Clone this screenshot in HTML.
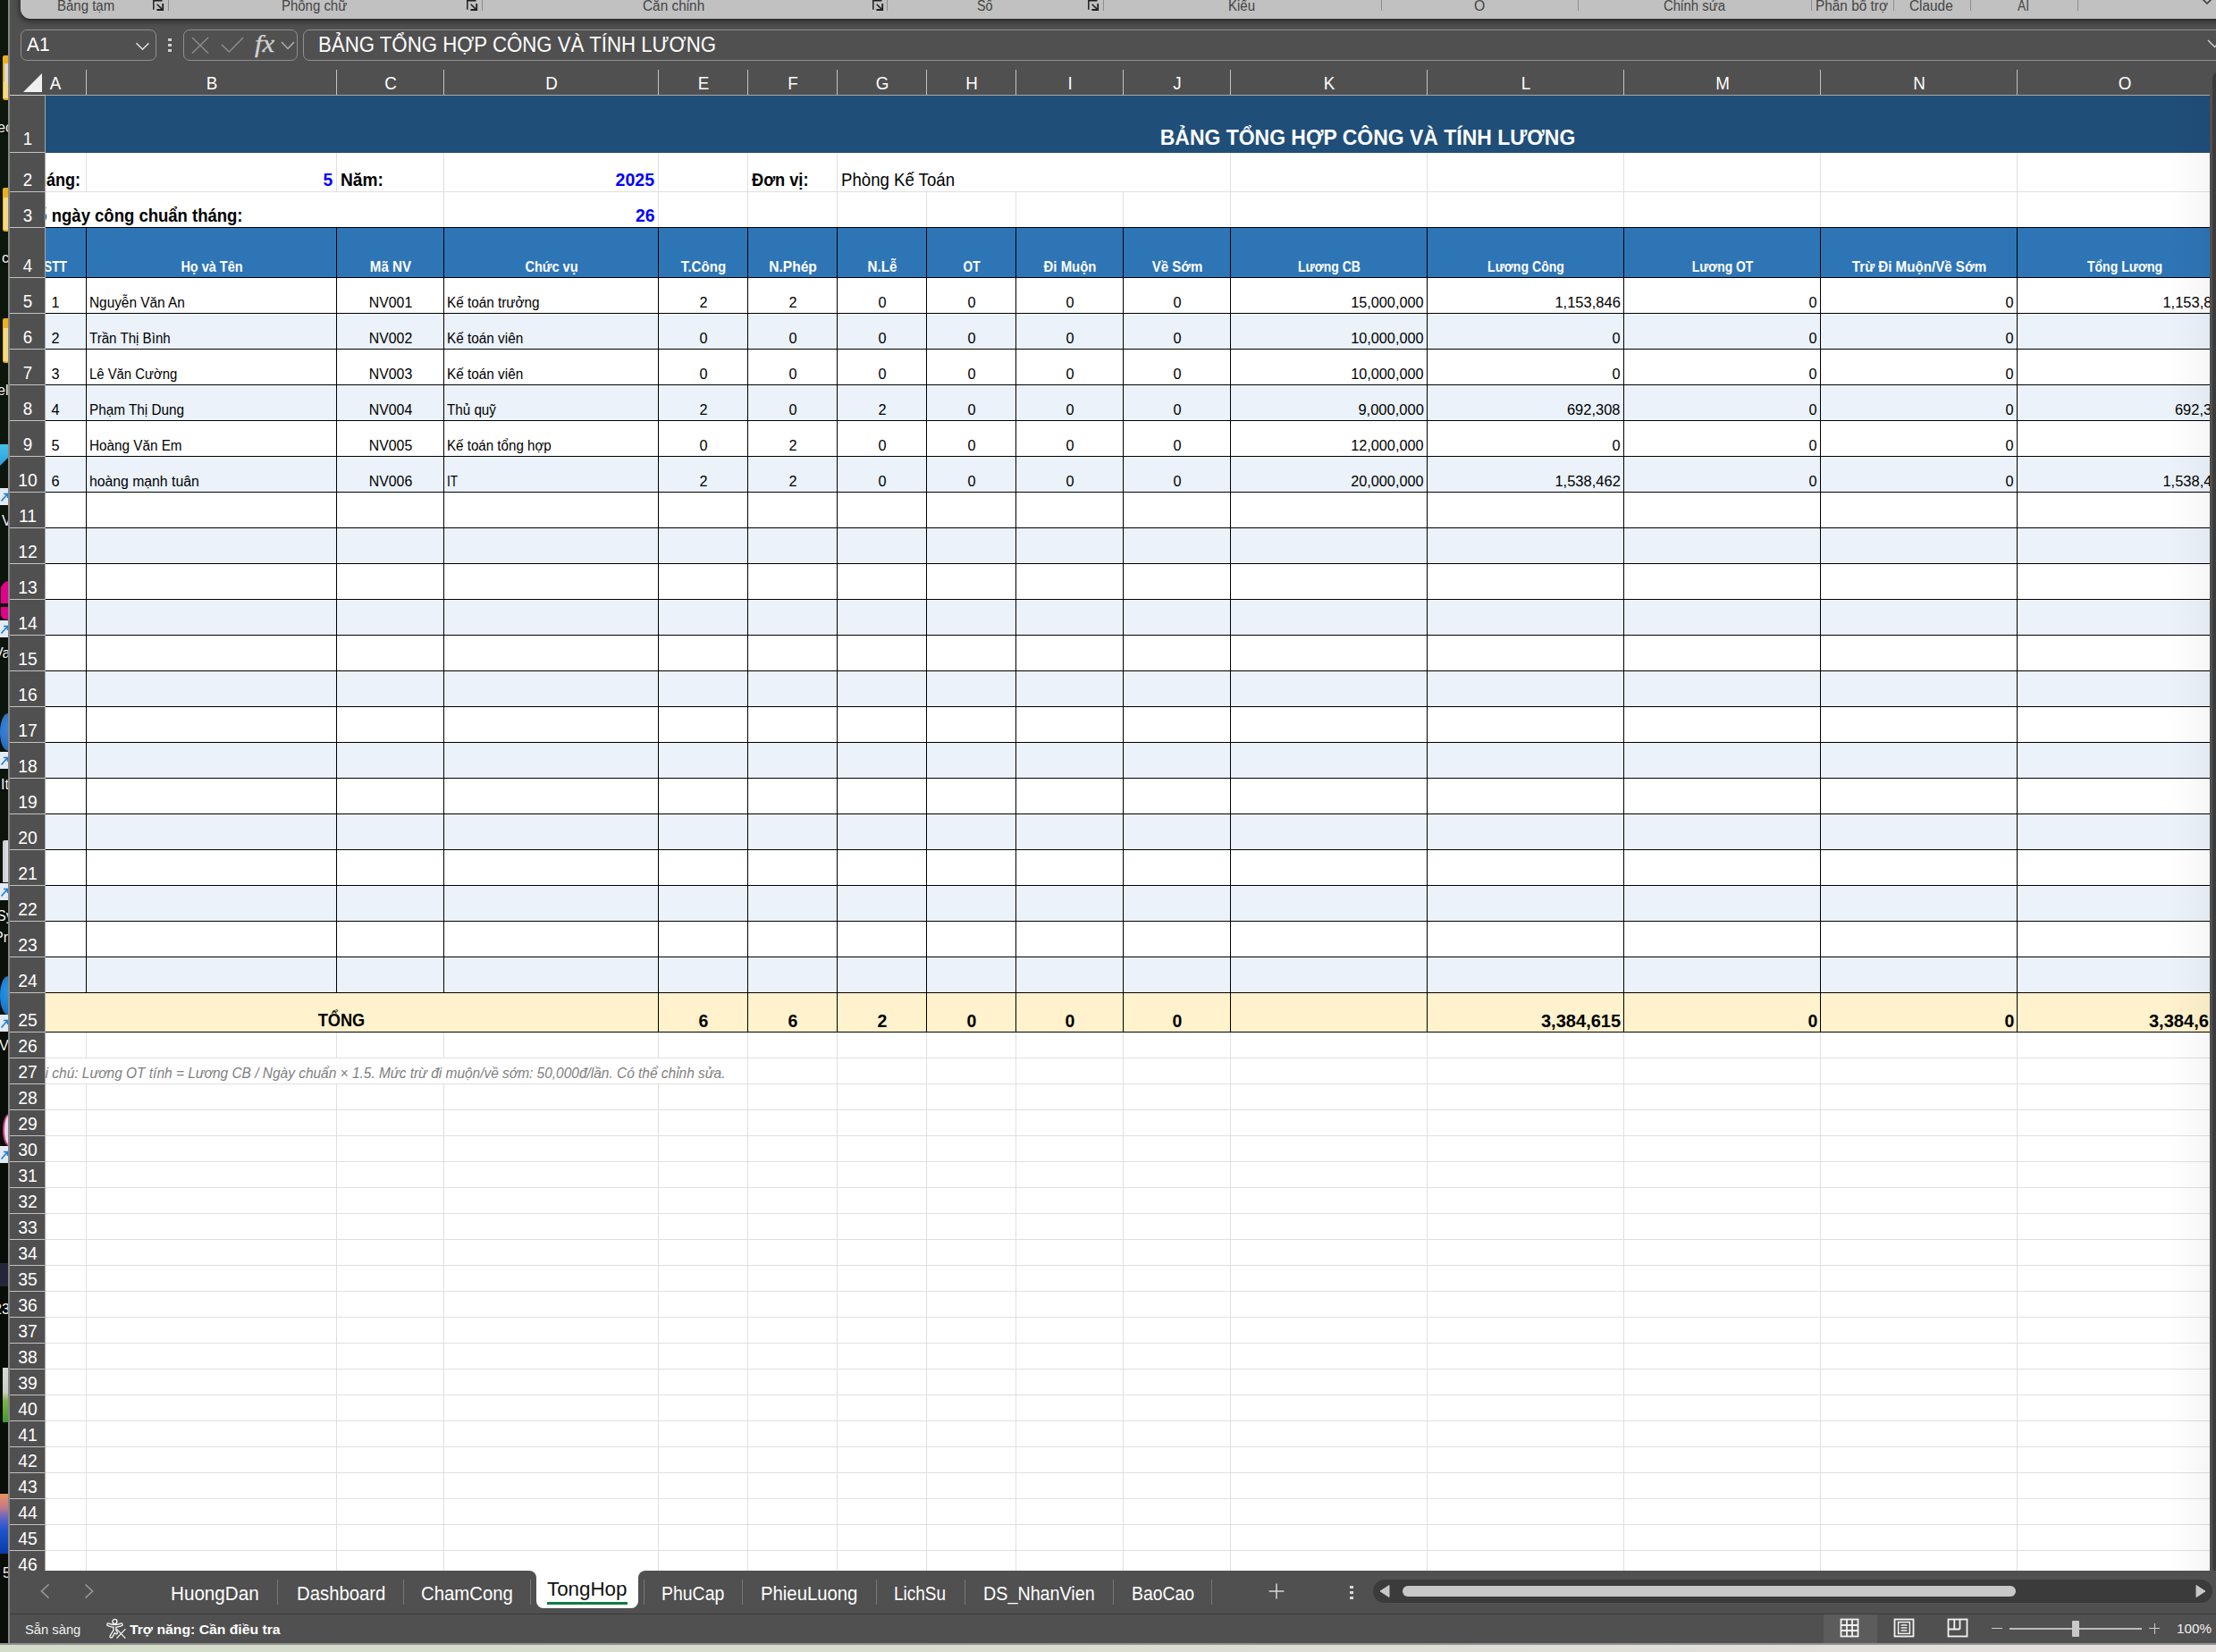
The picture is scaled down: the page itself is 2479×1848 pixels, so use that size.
<!DOCTYPE html>
<html lang="vi"><head><meta charset="utf-8"><title>TongHop - Excel</title>
<style>html,body{margin:0;padding:0;overflow:hidden}html{width:2479px;height:1848px}#root{position:absolute;left:0;top:0;width:2479px;height:1848px;overflow:hidden}body{width:2479px;height:1848px;overflow:hidden;background:#505050;position:relative;font-family:"Liberation Sans",sans-serif}.t{position:absolute;white-space:nowrap;display:block}.b{position:absolute;display:block}.clip{position:absolute;left:0;top:0;width:2479px;height:1848px;overflow:hidden}</style></head>
<body>
<div id="root">
<div class="clip" style="clip-path:inset(107px 7px 91px 51px);background:#fff">
<div class="b" style="left:96px;top:107px;width:1px;height:1650px;background:#e0e0e0;"></div>
<div class="b" style="left:376px;top:107px;width:1px;height:1650px;background:#e0e0e0;"></div>
<div class="b" style="left:496px;top:107px;width:1px;height:1650px;background:#e0e0e0;"></div>
<div class="b" style="left:736px;top:107px;width:1px;height:1650px;background:#e0e0e0;"></div>
<div class="b" style="left:836px;top:107px;width:1px;height:1650px;background:#e0e0e0;"></div>
<div class="b" style="left:936px;top:107px;width:1px;height:1650px;background:#e0e0e0;"></div>
<div class="b" style="left:1036px;top:107px;width:1px;height:1650px;background:#e0e0e0;"></div>
<div class="b" style="left:1136px;top:107px;width:1px;height:1650px;background:#e0e0e0;"></div>
<div class="b" style="left:1256px;top:107px;width:1px;height:1650px;background:#e0e0e0;"></div>
<div class="b" style="left:1376px;top:107px;width:1px;height:1650px;background:#e0e0e0;"></div>
<div class="b" style="left:1596px;top:107px;width:1px;height:1650px;background:#e0e0e0;"></div>
<div class="b" style="left:1816px;top:107px;width:1px;height:1650px;background:#e0e0e0;"></div>
<div class="b" style="left:2036px;top:107px;width:1px;height:1650px;background:#e0e0e0;"></div>
<div class="b" style="left:2256px;top:107px;width:1px;height:1650px;background:#e0e0e0;"></div>
<div class="b" style="left:51px;top:170px;width:2421px;height:1px;background:#e0e0e0;"></div>
<div class="b" style="left:51px;top:214px;width:2421px;height:1px;background:#e0e0e0;"></div>
<div class="b" style="left:51px;top:254px;width:2421px;height:1px;background:#e0e0e0;"></div>
<div class="b" style="left:51px;top:310px;width:2421px;height:1px;background:#e0e0e0;"></div>
<div class="b" style="left:51px;top:350px;width:2421px;height:1px;background:#e0e0e0;"></div>
<div class="b" style="left:51px;top:390px;width:2421px;height:1px;background:#e0e0e0;"></div>
<div class="b" style="left:51px;top:430px;width:2421px;height:1px;background:#e0e0e0;"></div>
<div class="b" style="left:51px;top:470px;width:2421px;height:1px;background:#e0e0e0;"></div>
<div class="b" style="left:51px;top:510px;width:2421px;height:1px;background:#e0e0e0;"></div>
<div class="b" style="left:51px;top:550px;width:2421px;height:1px;background:#e0e0e0;"></div>
<div class="b" style="left:51px;top:590px;width:2421px;height:1px;background:#e0e0e0;"></div>
<div class="b" style="left:51px;top:630px;width:2421px;height:1px;background:#e0e0e0;"></div>
<div class="b" style="left:51px;top:670px;width:2421px;height:1px;background:#e0e0e0;"></div>
<div class="b" style="left:51px;top:710px;width:2421px;height:1px;background:#e0e0e0;"></div>
<div class="b" style="left:51px;top:750px;width:2421px;height:1px;background:#e0e0e0;"></div>
<div class="b" style="left:51px;top:790px;width:2421px;height:1px;background:#e0e0e0;"></div>
<div class="b" style="left:51px;top:830px;width:2421px;height:1px;background:#e0e0e0;"></div>
<div class="b" style="left:51px;top:870px;width:2421px;height:1px;background:#e0e0e0;"></div>
<div class="b" style="left:51px;top:910px;width:2421px;height:1px;background:#e0e0e0;"></div>
<div class="b" style="left:51px;top:950px;width:2421px;height:1px;background:#e0e0e0;"></div>
<div class="b" style="left:51px;top:990px;width:2421px;height:1px;background:#e0e0e0;"></div>
<div class="b" style="left:51px;top:1030px;width:2421px;height:1px;background:#e0e0e0;"></div>
<div class="b" style="left:51px;top:1070px;width:2421px;height:1px;background:#e0e0e0;"></div>
<div class="b" style="left:51px;top:1110px;width:2421px;height:1px;background:#e0e0e0;"></div>
<div class="b" style="left:51px;top:1154px;width:2421px;height:1px;background:#e0e0e0;"></div>
<div class="b" style="left:51px;top:1183px;width:2421px;height:1px;background:#e0e0e0;"></div>
<div class="b" style="left:51px;top:1212px;width:2421px;height:1px;background:#e0e0e0;"></div>
<div class="b" style="left:51px;top:1241px;width:2421px;height:1px;background:#e0e0e0;"></div>
<div class="b" style="left:51px;top:1270px;width:2421px;height:1px;background:#e0e0e0;"></div>
<div class="b" style="left:51px;top:1299px;width:2421px;height:1px;background:#e0e0e0;"></div>
<div class="b" style="left:51px;top:1328px;width:2421px;height:1px;background:#e0e0e0;"></div>
<div class="b" style="left:51px;top:1357px;width:2421px;height:1px;background:#e0e0e0;"></div>
<div class="b" style="left:51px;top:1386px;width:2421px;height:1px;background:#e0e0e0;"></div>
<div class="b" style="left:51px;top:1415px;width:2421px;height:1px;background:#e0e0e0;"></div>
<div class="b" style="left:51px;top:1444px;width:2421px;height:1px;background:#e0e0e0;"></div>
<div class="b" style="left:51px;top:1473px;width:2421px;height:1px;background:#e0e0e0;"></div>
<div class="b" style="left:51px;top:1502px;width:2421px;height:1px;background:#e0e0e0;"></div>
<div class="b" style="left:51px;top:1531px;width:2421px;height:1px;background:#e0e0e0;"></div>
<div class="b" style="left:51px;top:1560px;width:2421px;height:1px;background:#e0e0e0;"></div>
<div class="b" style="left:51px;top:1589px;width:2421px;height:1px;background:#e0e0e0;"></div>
<div class="b" style="left:51px;top:1618px;width:2421px;height:1px;background:#e0e0e0;"></div>
<div class="b" style="left:51px;top:1647px;width:2421px;height:1px;background:#e0e0e0;"></div>
<div class="b" style="left:51px;top:1676px;width:2421px;height:1px;background:#e0e0e0;"></div>
<div class="b" style="left:51px;top:1705px;width:2421px;height:1px;background:#e0e0e0;"></div>
<div class="b" style="left:51px;top:1734px;width:2421px;height:1px;background:#e0e0e0;"></div>
<div class="b" style="left:51px;top:1763px;width:2421px;height:1px;background:#e0e0e0;"></div>
<div class="b" style="left:51px;top:215px;width:445px;height:39px;background:#fff;"></div>
<div class="b" style="left:937px;top:171px;width:439px;height:43px;background:#fff;"></div>
<div class="b" style="left:51px;top:1184px;width:785px;height:28px;background:#fff;"></div>
<div class="b" style="left:26px;top:107px;width:2470px;height:64px;background:#1f4e79;"></div>
<div class="b" style="left:26px;top:255px;width:2470px;height:55px;background:#2e75b6;"></div>
<div class="b" style="left:26px;top:311px;width:2470px;height:39px;background:#ffffff;"></div>
<div class="b" style="left:26px;top:351px;width:2470px;height:39px;background:#ebf2fa;"></div>
<div class="b" style="left:26px;top:391px;width:2470px;height:39px;background:#ffffff;"></div>
<div class="b" style="left:26px;top:431px;width:2470px;height:39px;background:#ebf2fa;"></div>
<div class="b" style="left:26px;top:471px;width:2470px;height:39px;background:#ffffff;"></div>
<div class="b" style="left:26px;top:511px;width:2470px;height:39px;background:#ebf2fa;"></div>
<div class="b" style="left:26px;top:551px;width:2470px;height:39px;background:#ffffff;"></div>
<div class="b" style="left:26px;top:591px;width:2470px;height:39px;background:#ebf2fa;"></div>
<div class="b" style="left:26px;top:631px;width:2470px;height:39px;background:#ffffff;"></div>
<div class="b" style="left:26px;top:671px;width:2470px;height:39px;background:#ebf2fa;"></div>
<div class="b" style="left:26px;top:711px;width:2470px;height:39px;background:#ffffff;"></div>
<div class="b" style="left:26px;top:751px;width:2470px;height:39px;background:#ebf2fa;"></div>
<div class="b" style="left:26px;top:791px;width:2470px;height:39px;background:#ffffff;"></div>
<div class="b" style="left:26px;top:831px;width:2470px;height:39px;background:#ebf2fa;"></div>
<div class="b" style="left:26px;top:871px;width:2470px;height:39px;background:#ffffff;"></div>
<div class="b" style="left:26px;top:911px;width:2470px;height:39px;background:#ebf2fa;"></div>
<div class="b" style="left:26px;top:951px;width:2470px;height:39px;background:#ffffff;"></div>
<div class="b" style="left:26px;top:991px;width:2470px;height:39px;background:#ebf2fa;"></div>
<div class="b" style="left:26px;top:1031px;width:2470px;height:39px;background:#ffffff;"></div>
<div class="b" style="left:26px;top:1071px;width:2470px;height:39px;background:#ebf2fa;"></div>
<div class="b" style="left:26px;top:1111px;width:2470px;height:43px;background:#fff2cc;"></div>
<div class="b" style="left:26px;top:254px;width:2470px;height:1px;background:#000;"></div>
<div class="b" style="left:26px;top:310px;width:2470px;height:1px;background:#000;"></div>
<div class="b" style="left:26px;top:350px;width:2470px;height:1px;background:#000;"></div>
<div class="b" style="left:26px;top:390px;width:2470px;height:1px;background:#000;"></div>
<div class="b" style="left:26px;top:430px;width:2470px;height:1px;background:#000;"></div>
<div class="b" style="left:26px;top:470px;width:2470px;height:1px;background:#000;"></div>
<div class="b" style="left:26px;top:510px;width:2470px;height:1px;background:#000;"></div>
<div class="b" style="left:26px;top:550px;width:2470px;height:1px;background:#000;"></div>
<div class="b" style="left:26px;top:590px;width:2470px;height:1px;background:#000;"></div>
<div class="b" style="left:26px;top:630px;width:2470px;height:1px;background:#000;"></div>
<div class="b" style="left:26px;top:670px;width:2470px;height:1px;background:#000;"></div>
<div class="b" style="left:26px;top:710px;width:2470px;height:1px;background:#000;"></div>
<div class="b" style="left:26px;top:750px;width:2470px;height:1px;background:#000;"></div>
<div class="b" style="left:26px;top:790px;width:2470px;height:1px;background:#000;"></div>
<div class="b" style="left:26px;top:830px;width:2470px;height:1px;background:#000;"></div>
<div class="b" style="left:26px;top:870px;width:2470px;height:1px;background:#000;"></div>
<div class="b" style="left:26px;top:910px;width:2470px;height:1px;background:#000;"></div>
<div class="b" style="left:26px;top:950px;width:2470px;height:1px;background:#000;"></div>
<div class="b" style="left:26px;top:990px;width:2470px;height:1px;background:#000;"></div>
<div class="b" style="left:26px;top:1030px;width:2470px;height:1px;background:#000;"></div>
<div class="b" style="left:26px;top:1070px;width:2470px;height:1px;background:#000;"></div>
<div class="b" style="left:26px;top:1110px;width:2470px;height:1px;background:#000;"></div>
<div class="b" style="left:26px;top:1154px;width:2470px;height:1px;background:#000;"></div>
<div class="b" style="left:96px;top:254px;width:1px;height:857px;background:#000;"></div>
<div class="b" style="left:376px;top:254px;width:1px;height:857px;background:#000;"></div>
<div class="b" style="left:496px;top:254px;width:1px;height:857px;background:#000;"></div>
<div class="b" style="left:736px;top:254px;width:1px;height:901px;background:#000;"></div>
<div class="b" style="left:836px;top:254px;width:1px;height:901px;background:#000;"></div>
<div class="b" style="left:936px;top:254px;width:1px;height:901px;background:#000;"></div>
<div class="b" style="left:1036px;top:254px;width:1px;height:901px;background:#000;"></div>
<div class="b" style="left:1136px;top:254px;width:1px;height:901px;background:#000;"></div>
<div class="b" style="left:1256px;top:254px;width:1px;height:901px;background:#000;"></div>
<div class="b" style="left:1376px;top:254px;width:1px;height:901px;background:#000;"></div>
<div class="b" style="left:1596px;top:254px;width:1px;height:901px;background:#000;"></div>
<div class="b" style="left:1816px;top:254px;width:1px;height:901px;background:#000;"></div>
<div class="b" style="left:2036px;top:254px;width:1px;height:901px;background:#000;"></div>
<div class="b" style="left:2256px;top:254px;width:1px;height:901px;background:#000;"></div>
<div class="b" style="left:2425px;top:107px;width:47px;height:1650px;background:linear-gradient(90deg,rgba(0,0,0,0),rgba(0,0,0,.035))"></div>
<span class="t" style="top:134.31px;line-height:39px;height:39px;color:#fff;font-size:24.5px;font-weight:bold;left:1530.00px;transform-origin:50% 50%;transform:translateX(-50%) scaleX(0.9367);">BẢNG TỔNG HỢP CÔNG VÀ TÍNH LƯƠNG</span><span class="t" style="top:184.67px;line-height:32px;height:32px;color:#000;font-size:20.3px;font-weight:bold;left:30.40px;transform-origin:0 50%;transform:scaleX(0.8877);">Tháng:</span><span class="t" style="top:184.67px;line-height:32px;height:32px;color:#0000ff;font-size:20.3px;font-weight:bold;right:2106.50px;transform-origin:100% 50%;transform:scaleX(0.9500);">5</span><span class="t" style="top:184.67px;line-height:32px;height:32px;color:#000;font-size:20.3px;font-weight:bold;left:380.50px;transform-origin:0 50%;transform:scaleX(0.9425);">Năm:</span><span class="t" style="top:184.67px;line-height:32px;height:32px;color:#0000ff;font-size:20.3px;font-weight:bold;right:1746.50px;transform-origin:100% 50%;transform:scaleX(0.9640);">2025</span><span class="t" style="top:184.67px;line-height:32px;height:32px;color:#000;font-size:20.3px;font-weight:bold;left:840.50px;transform-origin:0 50%;transform:scaleX(0.8973);">Đơn vị:</span><span class="t" style="top:184.67px;line-height:32px;height:32px;color:#000;font-size:20.3px;left:940.50px;transform-origin:0 50%;transform:scaleX(0.9180);">Phòng Kế Toán</span><span class="t" style="top:224.67px;line-height:32px;height:32px;color:#000;font-size:20.3px;font-weight:bold;left:29.00px;transform-origin:0 50%;transform:scaleX(0.9119);">Số ngày công chuẩn tháng:</span><span class="t" style="top:224.67px;line-height:32px;height:32px;color:#0000ff;font-size:20.3px;font-weight:bold;right:1746.50px;transform-origin:100% 50%;transform:scaleX(0.9529);">26</span><span class="t" style="top:284.21px;line-height:28px;height:28px;color:#fff;font-size:17.3px;font-weight:bold;left:61.50px;transform-origin:50% 50%;transform:translateX(-50%) scaleX(0.7904);">STT</span><span class="t" style="top:284.21px;line-height:28px;height:28px;color:#fff;font-size:17.3px;font-weight:bold;left:236.50px;transform-origin:50% 50%;transform:translateX(-50%) scaleX(0.8378);">Họ và Tên</span><span class="t" style="top:284.21px;line-height:28px;height:28px;color:#fff;font-size:17.3px;font-weight:bold;left:436.50px;transform-origin:50% 50%;transform:translateX(-50%) scaleX(0.8764);">Mã NV</span><span class="t" style="top:284.21px;line-height:28px;height:28px;color:#fff;font-size:17.3px;font-weight:bold;left:616.50px;transform-origin:50% 50%;transform:translateX(-50%) scaleX(0.8440);">Chức vụ</span><span class="t" style="top:284.21px;line-height:28px;height:28px;color:#fff;font-size:17.3px;font-weight:bold;left:786.50px;transform-origin:50% 50%;transform:translateX(-50%) scaleX(0.8734);">T.Công</span><span class="t" style="top:284.21px;line-height:28px;height:28px;color:#fff;font-size:17.3px;font-weight:bold;left:886.50px;transform-origin:50% 50%;transform:translateX(-50%) scaleX(0.9020);">N.Phép</span><span class="t" style="top:284.21px;line-height:28px;height:28px;color:#fff;font-size:17.3px;font-weight:bold;left:986.50px;transform-origin:50% 50%;transform:translateX(-50%) scaleX(0.8784);">N.Lễ</span><span class="t" style="top:284.21px;line-height:28px;height:28px;color:#fff;font-size:17.3px;font-weight:bold;left:1086.50px;transform-origin:50% 50%;transform:translateX(-50%) scaleX(0.7875);">OT</span><span class="t" style="top:284.21px;line-height:28px;height:28px;color:#fff;font-size:17.3px;font-weight:bold;left:1196.50px;transform-origin:50% 50%;transform:translateX(-50%) scaleX(0.8627);">Đi Muộn</span><span class="t" style="top:284.21px;line-height:28px;height:28px;color:#fff;font-size:17.3px;font-weight:bold;left:1316.50px;transform-origin:50% 50%;transform:translateX(-50%) scaleX(0.8691);">Về Sớm</span><span class="t" style="top:284.21px;line-height:28px;height:28px;color:#fff;font-size:17.3px;font-weight:bold;left:1486.50px;transform-origin:50% 50%;transform:translateX(-50%) scaleX(0.8106);">Lương CB</span><span class="t" style="top:284.21px;line-height:28px;height:28px;color:#fff;font-size:17.3px;font-weight:bold;left:1706.50px;transform-origin:50% 50%;transform:translateX(-50%) scaleX(0.8148);">Lương Công</span><span class="t" style="top:284.21px;line-height:28px;height:28px;color:#fff;font-size:17.3px;font-weight:bold;left:1926.50px;transform-origin:50% 50%;transform:translateX(-50%) scaleX(0.8032);">Lương OT</span><span class="t" style="top:284.21px;line-height:28px;height:28px;color:#fff;font-size:17.3px;font-weight:bold;left:2146.50px;transform-origin:50% 50%;transform:translateX(-50%) scaleX(0.8753);">Trừ Đi Muộn/Về Sớm</span><span class="t" style="top:284.21px;line-height:28px;height:28px;color:#fff;font-size:17.3px;font-weight:bold;left:2376.50px;transform-origin:50% 50%;transform:translateX(-50%) scaleX(0.8126);">Tổng Lương</span><span class="t" style="top:324.31px;line-height:28px;height:28px;color:#000;font-size:17.3px;left:61.50px;transform-origin:50% 50%;transform:translateX(-50%) scaleX(0.9400);">1</span><span class="t" style="top:324.31px;line-height:28px;height:28px;color:#000;font-size:17.3px;left:100.40px;transform-origin:0 50%;transform:scaleX(0.8892);">Nguyễn Văn An</span><span class="t" style="top:324.31px;line-height:28px;height:28px;color:#000;font-size:17.3px;left:436.50px;transform-origin:50% 50%;transform:translateX(-50%) scaleX(0.9159);">NV001</span><span class="t" style="top:324.31px;line-height:28px;height:28px;color:#000;font-size:17.3px;left:500.20px;transform-origin:0 50%;transform:scaleX(0.8850);">Kế toán trưởng</span><span class="t" style="top:324.31px;line-height:28px;height:28px;color:#000;font-size:17.3px;left:786.50px;transform-origin:50% 50%;transform:translateX(-50%) scaleX(0.9400);">2</span><span class="t" style="top:324.31px;line-height:28px;height:28px;color:#000;font-size:17.3px;left:886.50px;transform-origin:50% 50%;transform:translateX(-50%) scaleX(0.9400);">2</span><span class="t" style="top:324.31px;line-height:28px;height:28px;color:#000;font-size:17.3px;left:986.50px;transform-origin:50% 50%;transform:translateX(-50%) scaleX(0.9400);">0</span><span class="t" style="top:324.31px;line-height:28px;height:28px;color:#000;font-size:17.3px;left:1086.50px;transform-origin:50% 50%;transform:translateX(-50%) scaleX(0.9400);">0</span><span class="t" style="top:324.31px;line-height:28px;height:28px;color:#000;font-size:17.3px;left:1196.50px;transform-origin:50% 50%;transform:translateX(-50%) scaleX(0.9400);">0</span><span class="t" style="top:324.31px;line-height:28px;height:28px;color:#000;font-size:17.3px;left:1316.50px;transform-origin:50% 50%;transform:translateX(-50%) scaleX(0.9400);">0</span><span class="t" style="top:324.31px;line-height:28px;height:28px;color:#000;font-size:17.3px;right:886.20px;transform-origin:100% 50%;transform:scaleX(0.9399);">15,000,000</span><span class="t" style="top:324.31px;line-height:28px;height:28px;color:#000;font-size:17.3px;right:666.20px;transform-origin:100% 50%;transform:scaleX(0.9559);">1,153,846</span><span class="t" style="top:324.31px;line-height:28px;height:28px;color:#000;font-size:17.3px;right:446.20px;transform-origin:100% 50%;transform:scaleX(0.9400);">0</span><span class="t" style="top:324.31px;line-height:28px;height:28px;color:#000;font-size:17.3px;right:226.20px;transform-origin:100% 50%;transform:scaleX(0.9400);">0</span><span class="t" style="top:324.31px;line-height:28px;height:28px;color:#000;font-size:17.3px;right:-13.80px;transform-origin:100% 50%;transform:scaleX(0.9559);">1,153,846</span><span class="t" style="top:364.31px;line-height:28px;height:28px;color:#000;font-size:17.3px;left:61.50px;transform-origin:50% 50%;transform:translateX(-50%) scaleX(0.9400);">2</span><span class="t" style="top:364.31px;line-height:28px;height:28px;color:#000;font-size:17.3px;left:100.40px;transform-origin:0 50%;transform:scaleX(0.8742);">Trần Thị Bình</span><span class="t" style="top:364.31px;line-height:28px;height:28px;color:#000;font-size:17.3px;left:436.50px;transform-origin:50% 50%;transform:translateX(-50%) scaleX(0.9159);">NV002</span><span class="t" style="top:364.31px;line-height:28px;height:28px;color:#000;font-size:17.3px;left:500.20px;transform-origin:0 50%;transform:scaleX(0.8868);">Kế toán viên</span><span class="t" style="top:364.31px;line-height:28px;height:28px;color:#000;font-size:17.3px;left:786.50px;transform-origin:50% 50%;transform:translateX(-50%) scaleX(0.9400);">0</span><span class="t" style="top:364.31px;line-height:28px;height:28px;color:#000;font-size:17.3px;left:886.50px;transform-origin:50% 50%;transform:translateX(-50%) scaleX(0.9400);">0</span><span class="t" style="top:364.31px;line-height:28px;height:28px;color:#000;font-size:17.3px;left:986.50px;transform-origin:50% 50%;transform:translateX(-50%) scaleX(0.9400);">0</span><span class="t" style="top:364.31px;line-height:28px;height:28px;color:#000;font-size:17.3px;left:1086.50px;transform-origin:50% 50%;transform:translateX(-50%) scaleX(0.9400);">0</span><span class="t" style="top:364.31px;line-height:28px;height:28px;color:#000;font-size:17.3px;left:1196.50px;transform-origin:50% 50%;transform:translateX(-50%) scaleX(0.9400);">0</span><span class="t" style="top:364.31px;line-height:28px;height:28px;color:#000;font-size:17.3px;left:1316.50px;transform-origin:50% 50%;transform:translateX(-50%) scaleX(0.9400);">0</span><span class="t" style="top:364.31px;line-height:28px;height:28px;color:#000;font-size:17.3px;right:886.20px;transform-origin:100% 50%;transform:scaleX(0.9399);">10,000,000</span><span class="t" style="top:364.31px;line-height:28px;height:28px;color:#000;font-size:17.3px;right:666.20px;transform-origin:100% 50%;transform:scaleX(0.9400);">0</span><span class="t" style="top:364.31px;line-height:28px;height:28px;color:#000;font-size:17.3px;right:446.20px;transform-origin:100% 50%;transform:scaleX(0.9400);">0</span><span class="t" style="top:364.31px;line-height:28px;height:28px;color:#000;font-size:17.3px;right:226.20px;transform-origin:100% 50%;transform:scaleX(0.9400);">0</span><span class="t" style="top:404.31px;line-height:28px;height:28px;color:#000;font-size:17.3px;left:61.50px;transform-origin:50% 50%;transform:translateX(-50%) scaleX(0.9400);">3</span><span class="t" style="top:404.31px;line-height:28px;height:28px;color:#000;font-size:17.3px;left:100.40px;transform-origin:0 50%;transform:scaleX(0.8600);">Lê Văn Cường</span><span class="t" style="top:404.31px;line-height:28px;height:28px;color:#000;font-size:17.3px;left:436.50px;transform-origin:50% 50%;transform:translateX(-50%) scaleX(0.9159);">NV003</span><span class="t" style="top:404.31px;line-height:28px;height:28px;color:#000;font-size:17.3px;left:500.20px;transform-origin:0 50%;transform:scaleX(0.8868);">Kế toán viên</span><span class="t" style="top:404.31px;line-height:28px;height:28px;color:#000;font-size:17.3px;left:786.50px;transform-origin:50% 50%;transform:translateX(-50%) scaleX(0.9400);">0</span><span class="t" style="top:404.31px;line-height:28px;height:28px;color:#000;font-size:17.3px;left:886.50px;transform-origin:50% 50%;transform:translateX(-50%) scaleX(0.9400);">0</span><span class="t" style="top:404.31px;line-height:28px;height:28px;color:#000;font-size:17.3px;left:986.50px;transform-origin:50% 50%;transform:translateX(-50%) scaleX(0.9400);">0</span><span class="t" style="top:404.31px;line-height:28px;height:28px;color:#000;font-size:17.3px;left:1086.50px;transform-origin:50% 50%;transform:translateX(-50%) scaleX(0.9400);">0</span><span class="t" style="top:404.31px;line-height:28px;height:28px;color:#000;font-size:17.3px;left:1196.50px;transform-origin:50% 50%;transform:translateX(-50%) scaleX(0.9400);">0</span><span class="t" style="top:404.31px;line-height:28px;height:28px;color:#000;font-size:17.3px;left:1316.50px;transform-origin:50% 50%;transform:translateX(-50%) scaleX(0.9400);">0</span><span class="t" style="top:404.31px;line-height:28px;height:28px;color:#000;font-size:17.3px;right:886.20px;transform-origin:100% 50%;transform:scaleX(0.9399);">10,000,000</span><span class="t" style="top:404.31px;line-height:28px;height:28px;color:#000;font-size:17.3px;right:666.20px;transform-origin:100% 50%;transform:scaleX(0.9400);">0</span><span class="t" style="top:404.31px;line-height:28px;height:28px;color:#000;font-size:17.3px;right:446.20px;transform-origin:100% 50%;transform:scaleX(0.9400);">0</span><span class="t" style="top:404.31px;line-height:28px;height:28px;color:#000;font-size:17.3px;right:226.20px;transform-origin:100% 50%;transform:scaleX(0.9400);">0</span><span class="t" style="top:444.31px;line-height:28px;height:28px;color:#000;font-size:17.3px;left:61.50px;transform-origin:50% 50%;transform:translateX(-50%) scaleX(0.9400);">4</span><span class="t" style="top:444.31px;line-height:28px;height:28px;color:#000;font-size:17.3px;left:100.40px;transform-origin:0 50%;transform:scaleX(0.8859);">Phạm Thị Dung</span><span class="t" style="top:444.31px;line-height:28px;height:28px;color:#000;font-size:17.3px;left:436.50px;transform-origin:50% 50%;transform:translateX(-50%) scaleX(0.9159);">NV004</span><span class="t" style="top:444.31px;line-height:28px;height:28px;color:#000;font-size:17.3px;left:500.20px;transform-origin:0 50%;transform:scaleX(0.8791);">Thủ quỹ</span><span class="t" style="top:444.31px;line-height:28px;height:28px;color:#000;font-size:17.3px;left:786.50px;transform-origin:50% 50%;transform:translateX(-50%) scaleX(0.9400);">2</span><span class="t" style="top:444.31px;line-height:28px;height:28px;color:#000;font-size:17.3px;left:886.50px;transform-origin:50% 50%;transform:translateX(-50%) scaleX(0.9400);">0</span><span class="t" style="top:444.31px;line-height:28px;height:28px;color:#000;font-size:17.3px;left:986.50px;transform-origin:50% 50%;transform:translateX(-50%) scaleX(0.9400);">2</span><span class="t" style="top:444.31px;line-height:28px;height:28px;color:#000;font-size:17.3px;left:1086.50px;transform-origin:50% 50%;transform:translateX(-50%) scaleX(0.9400);">0</span><span class="t" style="top:444.31px;line-height:28px;height:28px;color:#000;font-size:17.3px;left:1196.50px;transform-origin:50% 50%;transform:translateX(-50%) scaleX(0.9400);">0</span><span class="t" style="top:444.31px;line-height:28px;height:28px;color:#000;font-size:17.3px;left:1316.50px;transform-origin:50% 50%;transform:translateX(-50%) scaleX(0.9400);">0</span><span class="t" style="top:444.31px;line-height:28px;height:28px;color:#000;font-size:17.3px;right:886.20px;transform-origin:100% 50%;transform:scaleX(0.9559);">9,000,000</span><span class="t" style="top:444.31px;line-height:28px;height:28px;color:#000;font-size:17.3px;right:666.20px;transform-origin:100% 50%;transform:scaleX(0.9525);">692,308</span><span class="t" style="top:444.31px;line-height:28px;height:28px;color:#000;font-size:17.3px;right:446.20px;transform-origin:100% 50%;transform:scaleX(0.9400);">0</span><span class="t" style="top:444.31px;line-height:28px;height:28px;color:#000;font-size:17.3px;right:226.20px;transform-origin:100% 50%;transform:scaleX(0.9400);">0</span><span class="t" style="top:444.31px;line-height:28px;height:28px;color:#000;font-size:17.3px;right:-13.80px;transform-origin:100% 50%;transform:scaleX(0.9525);">692,308</span><span class="t" style="top:484.31px;line-height:28px;height:28px;color:#000;font-size:17.3px;left:61.50px;transform-origin:50% 50%;transform:translateX(-50%) scaleX(0.9400);">5</span><span class="t" style="top:484.31px;line-height:28px;height:28px;color:#000;font-size:17.3px;left:100.40px;transform-origin:0 50%;transform:scaleX(0.8839);">Hoàng Văn Em</span><span class="t" style="top:484.31px;line-height:28px;height:28px;color:#000;font-size:17.3px;left:436.50px;transform-origin:50% 50%;transform:translateX(-50%) scaleX(0.9159);">NV005</span><span class="t" style="top:484.31px;line-height:28px;height:28px;color:#000;font-size:17.3px;left:500.20px;transform-origin:0 50%;transform:scaleX(0.8757);">Kế toán tổng hợp</span><span class="t" style="top:484.31px;line-height:28px;height:28px;color:#000;font-size:17.3px;left:786.50px;transform-origin:50% 50%;transform:translateX(-50%) scaleX(0.9400);">0</span><span class="t" style="top:484.31px;line-height:28px;height:28px;color:#000;font-size:17.3px;left:886.50px;transform-origin:50% 50%;transform:translateX(-50%) scaleX(0.9400);">2</span><span class="t" style="top:484.31px;line-height:28px;height:28px;color:#000;font-size:17.3px;left:986.50px;transform-origin:50% 50%;transform:translateX(-50%) scaleX(0.9400);">0</span><span class="t" style="top:484.31px;line-height:28px;height:28px;color:#000;font-size:17.3px;left:1086.50px;transform-origin:50% 50%;transform:translateX(-50%) scaleX(0.9400);">0</span><span class="t" style="top:484.31px;line-height:28px;height:28px;color:#000;font-size:17.3px;left:1196.50px;transform-origin:50% 50%;transform:translateX(-50%) scaleX(0.9400);">0</span><span class="t" style="top:484.31px;line-height:28px;height:28px;color:#000;font-size:17.3px;left:1316.50px;transform-origin:50% 50%;transform:translateX(-50%) scaleX(0.9400);">0</span><span class="t" style="top:484.31px;line-height:28px;height:28px;color:#000;font-size:17.3px;right:886.20px;transform-origin:100% 50%;transform:scaleX(0.9399);">12,000,000</span><span class="t" style="top:484.31px;line-height:28px;height:28px;color:#000;font-size:17.3px;right:666.20px;transform-origin:100% 50%;transform:scaleX(0.9400);">0</span><span class="t" style="top:484.31px;line-height:28px;height:28px;color:#000;font-size:17.3px;right:446.20px;transform-origin:100% 50%;transform:scaleX(0.9400);">0</span><span class="t" style="top:484.31px;line-height:28px;height:28px;color:#000;font-size:17.3px;right:226.20px;transform-origin:100% 50%;transform:scaleX(0.9400);">0</span><span class="t" style="top:524.31px;line-height:28px;height:28px;color:#000;font-size:17.3px;left:61.50px;transform-origin:50% 50%;transform:translateX(-50%) scaleX(0.9400);">6</span><span class="t" style="top:524.31px;line-height:28px;height:28px;color:#000;font-size:17.3px;left:100.40px;transform-origin:0 50%;transform:scaleX(0.9121);">hoàng mạnh tuân</span><span class="t" style="top:524.31px;line-height:28px;height:28px;color:#000;font-size:17.3px;left:436.50px;transform-origin:50% 50%;transform:translateX(-50%) scaleX(0.9159);">NV006</span><span class="t" style="top:524.31px;line-height:28px;height:28px;color:#000;font-size:17.3px;left:500.20px;transform-origin:0 50%;transform:scaleX(0.7878);">IT</span><span class="t" style="top:524.31px;line-height:28px;height:28px;color:#000;font-size:17.3px;left:786.50px;transform-origin:50% 50%;transform:translateX(-50%) scaleX(0.9400);">2</span><span class="t" style="top:524.31px;line-height:28px;height:28px;color:#000;font-size:17.3px;left:886.50px;transform-origin:50% 50%;transform:translateX(-50%) scaleX(0.9400);">2</span><span class="t" style="top:524.31px;line-height:28px;height:28px;color:#000;font-size:17.3px;left:986.50px;transform-origin:50% 50%;transform:translateX(-50%) scaleX(0.9400);">0</span><span class="t" style="top:524.31px;line-height:28px;height:28px;color:#000;font-size:17.3px;left:1086.50px;transform-origin:50% 50%;transform:translateX(-50%) scaleX(0.9400);">0</span><span class="t" style="top:524.31px;line-height:28px;height:28px;color:#000;font-size:17.3px;left:1196.50px;transform-origin:50% 50%;transform:translateX(-50%) scaleX(0.9400);">0</span><span class="t" style="top:524.31px;line-height:28px;height:28px;color:#000;font-size:17.3px;left:1316.50px;transform-origin:50% 50%;transform:translateX(-50%) scaleX(0.9400);">0</span><span class="t" style="top:524.31px;line-height:28px;height:28px;color:#000;font-size:17.3px;right:886.20px;transform-origin:100% 50%;transform:scaleX(0.9399);">20,000,000</span><span class="t" style="top:524.31px;line-height:28px;height:28px;color:#000;font-size:17.3px;right:666.20px;transform-origin:100% 50%;transform:scaleX(0.9559);">1,538,462</span><span class="t" style="top:524.31px;line-height:28px;height:28px;color:#000;font-size:17.3px;right:446.20px;transform-origin:100% 50%;transform:scaleX(0.9400);">0</span><span class="t" style="top:524.31px;line-height:28px;height:28px;color:#000;font-size:17.3px;right:226.20px;transform-origin:100% 50%;transform:scaleX(0.9400);">0</span><span class="t" style="top:524.31px;line-height:28px;height:28px;color:#000;font-size:17.3px;right:-13.80px;transform-origin:100% 50%;transform:scaleX(0.9559);">1,538,462</span><span class="t" style="top:1125.27px;line-height:32px;height:32px;color:#000;font-size:20.3px;font-weight:bold;left:382.00px;transform-origin:50% 50%;transform:translateX(-50%) scaleX(0.8960);">TỔNG</span><span class="t" style="top:1124.70px;line-height:33px;height:33px;color:#000;font-size:20.5px;font-weight:bold;left:786.50px;transform-origin:50% 50%;transform:translateX(-50%) scaleX(0.9500);">6</span><span class="t" style="top:1124.70px;line-height:33px;height:33px;color:#000;font-size:20.5px;font-weight:bold;left:886.50px;transform-origin:50% 50%;transform:translateX(-50%) scaleX(0.9500);">6</span><span class="t" style="top:1124.70px;line-height:33px;height:33px;color:#000;font-size:20.5px;font-weight:bold;left:986.50px;transform-origin:50% 50%;transform:translateX(-50%) scaleX(0.9500);">2</span><span class="t" style="top:1124.70px;line-height:33px;height:33px;color:#000;font-size:20.5px;font-weight:bold;left:1086.50px;transform-origin:50% 50%;transform:translateX(-50%) scaleX(0.9500);">0</span><span class="t" style="top:1124.70px;line-height:33px;height:33px;color:#000;font-size:20.5px;font-weight:bold;left:1196.50px;transform-origin:50% 50%;transform:translateX(-50%) scaleX(0.9500);">0</span><span class="t" style="top:1124.70px;line-height:33px;height:33px;color:#000;font-size:20.5px;font-weight:bold;left:1316.50px;transform-origin:50% 50%;transform:translateX(-50%) scaleX(0.9500);">0</span><span class="t" style="top:1124.70px;line-height:33px;height:33px;color:#000;font-size:20.5px;font-weight:bold;right:665.70px;transform-origin:100% 50%;transform:scaleX(0.9791);">3,384,615</span><span class="t" style="top:1124.70px;line-height:33px;height:33px;color:#000;font-size:20.5px;font-weight:bold;right:445.70px;transform-origin:100% 50%;transform:scaleX(0.9500);">0</span><span class="t" style="top:1124.70px;line-height:33px;height:33px;color:#000;font-size:20.5px;font-weight:bold;right:225.70px;transform-origin:100% 50%;transform:scaleX(0.9500);">0</span><span class="t" style="top:1124.70px;line-height:33px;height:33px;color:#000;font-size:20.5px;font-weight:bold;right:-14.30px;transform-origin:100% 50%;transform:scaleX(0.9791);">3,384,615</span><span class="t" style="top:1187.53px;line-height:25px;height:25px;color:#7f7f7f;font-size:15.8px;font-style:italic;left:30.40px;transform-origin:0 50%;transform:scaleX(0.9784);">Ghi chú: Lương OT tính = Lương CB / Ngày chuẩn × 1.5. Mức trừ đi muộn/về sớm: 50,000đ/lần. Có thể chỉnh sửa.</span>
</div>
<div class="clip" style="clip-path:inset(107px 2429px 91px 11px)">
<span class="t" style="top:139.54px;line-height:31px;height:31px;color:#fff;font-size:19.5px;left:30.50px;transform-origin:50% 50%;transform:translateX(-50%) scaleX(0.9600);">1</span><span class="t" style="top:186.34px;line-height:31px;height:31px;color:#fff;font-size:19.5px;left:30.50px;transform-origin:50% 50%;transform:translateX(-50%) scaleX(0.9600);">2</span><span class="t" style="top:226.34px;line-height:31px;height:31px;color:#fff;font-size:19.5px;left:30.50px;transform-origin:50% 50%;transform:translateX(-50%) scaleX(0.9600);">3</span><span class="t" style="top:282.34px;line-height:31px;height:31px;color:#fff;font-size:19.5px;left:30.50px;transform-origin:50% 50%;transform:translateX(-50%) scaleX(0.9600);">4</span><span class="t" style="top:322.34px;line-height:31px;height:31px;color:#fff;font-size:19.5px;left:30.50px;transform-origin:50% 50%;transform:translateX(-50%) scaleX(0.9600);">5</span><span class="t" style="top:362.34px;line-height:31px;height:31px;color:#fff;font-size:19.5px;left:30.50px;transform-origin:50% 50%;transform:translateX(-50%) scaleX(0.9600);">6</span><span class="t" style="top:402.34px;line-height:31px;height:31px;color:#fff;font-size:19.5px;left:30.50px;transform-origin:50% 50%;transform:translateX(-50%) scaleX(0.9600);">7</span><span class="t" style="top:442.34px;line-height:31px;height:31px;color:#fff;font-size:19.5px;left:30.50px;transform-origin:50% 50%;transform:translateX(-50%) scaleX(0.9600);">8</span><span class="t" style="top:482.34px;line-height:31px;height:31px;color:#fff;font-size:19.5px;left:30.50px;transform-origin:50% 50%;transform:translateX(-50%) scaleX(0.9600);">9</span><span class="t" style="top:522.34px;line-height:31px;height:31px;color:#fff;font-size:19.5px;left:31.40px;transform-origin:50% 50%;transform:translateX(-50%) scaleX(0.9900);">10</span><span class="t" style="top:562.34px;line-height:31px;height:31px;color:#fff;font-size:19.5px;left:31.40px;transform-origin:50% 50%;transform:translateX(-50%) scaleX(0.9900);">11</span><span class="t" style="top:602.34px;line-height:31px;height:31px;color:#fff;font-size:19.5px;left:31.40px;transform-origin:50% 50%;transform:translateX(-50%) scaleX(0.9900);">12</span><span class="t" style="top:642.34px;line-height:31px;height:31px;color:#fff;font-size:19.5px;left:31.40px;transform-origin:50% 50%;transform:translateX(-50%) scaleX(0.9900);">13</span><span class="t" style="top:682.34px;line-height:31px;height:31px;color:#fff;font-size:19.5px;left:31.40px;transform-origin:50% 50%;transform:translateX(-50%) scaleX(0.9900);">14</span><span class="t" style="top:722.34px;line-height:31px;height:31px;color:#fff;font-size:19.5px;left:31.40px;transform-origin:50% 50%;transform:translateX(-50%) scaleX(0.9900);">15</span><span class="t" style="top:762.34px;line-height:31px;height:31px;color:#fff;font-size:19.5px;left:31.40px;transform-origin:50% 50%;transform:translateX(-50%) scaleX(0.9900);">16</span><span class="t" style="top:802.34px;line-height:31px;height:31px;color:#fff;font-size:19.5px;left:31.40px;transform-origin:50% 50%;transform:translateX(-50%) scaleX(0.9900);">17</span><span class="t" style="top:842.34px;line-height:31px;height:31px;color:#fff;font-size:19.5px;left:31.40px;transform-origin:50% 50%;transform:translateX(-50%) scaleX(0.9900);">18</span><span class="t" style="top:882.34px;line-height:31px;height:31px;color:#fff;font-size:19.5px;left:31.40px;transform-origin:50% 50%;transform:translateX(-50%) scaleX(0.9900);">19</span><span class="t" style="top:922.34px;line-height:31px;height:31px;color:#fff;font-size:19.5px;left:31.40px;transform-origin:50% 50%;transform:translateX(-50%) scaleX(0.9900);">20</span><span class="t" style="top:962.34px;line-height:31px;height:31px;color:#fff;font-size:19.5px;left:31.40px;transform-origin:50% 50%;transform:translateX(-50%) scaleX(0.9900);">21</span><span class="t" style="top:1002.34px;line-height:31px;height:31px;color:#fff;font-size:19.5px;left:31.40px;transform-origin:50% 50%;transform:translateX(-50%) scaleX(0.9900);">22</span><span class="t" style="top:1042.34px;line-height:31px;height:31px;color:#fff;font-size:19.5px;left:31.40px;transform-origin:50% 50%;transform:translateX(-50%) scaleX(0.9900);">23</span><span class="t" style="top:1082.34px;line-height:31px;height:31px;color:#fff;font-size:19.5px;left:31.40px;transform-origin:50% 50%;transform:translateX(-50%) scaleX(0.9900);">24</span><span class="t" style="top:1126.34px;line-height:31px;height:31px;color:#fff;font-size:19.5px;left:31.40px;transform-origin:50% 50%;transform:translateX(-50%) scaleX(0.9900);">25</span><span class="t" style="top:1155.34px;line-height:31px;height:31px;color:#fff;font-size:19.5px;left:31.40px;transform-origin:50% 50%;transform:translateX(-50%) scaleX(0.9900);">26</span><span class="t" style="top:1184.34px;line-height:31px;height:31px;color:#fff;font-size:19.5px;left:31.40px;transform-origin:50% 50%;transform:translateX(-50%) scaleX(0.9900);">27</span><span class="t" style="top:1213.34px;line-height:31px;height:31px;color:#fff;font-size:19.5px;left:31.40px;transform-origin:50% 50%;transform:translateX(-50%) scaleX(0.9900);">28</span><span class="t" style="top:1242.34px;line-height:31px;height:31px;color:#fff;font-size:19.5px;left:31.40px;transform-origin:50% 50%;transform:translateX(-50%) scaleX(0.9900);">29</span><span class="t" style="top:1271.34px;line-height:31px;height:31px;color:#fff;font-size:19.5px;left:31.40px;transform-origin:50% 50%;transform:translateX(-50%) scaleX(0.9900);">30</span><span class="t" style="top:1300.34px;line-height:31px;height:31px;color:#fff;font-size:19.5px;left:31.40px;transform-origin:50% 50%;transform:translateX(-50%) scaleX(0.9900);">31</span><span class="t" style="top:1329.34px;line-height:31px;height:31px;color:#fff;font-size:19.5px;left:31.40px;transform-origin:50% 50%;transform:translateX(-50%) scaleX(0.9900);">32</span><span class="t" style="top:1358.34px;line-height:31px;height:31px;color:#fff;font-size:19.5px;left:31.40px;transform-origin:50% 50%;transform:translateX(-50%) scaleX(0.9900);">33</span><span class="t" style="top:1387.34px;line-height:31px;height:31px;color:#fff;font-size:19.5px;left:31.40px;transform-origin:50% 50%;transform:translateX(-50%) scaleX(0.9900);">34</span><span class="t" style="top:1416.34px;line-height:31px;height:31px;color:#fff;font-size:19.5px;left:31.40px;transform-origin:50% 50%;transform:translateX(-50%) scaleX(0.9900);">35</span><span class="t" style="top:1445.34px;line-height:31px;height:31px;color:#fff;font-size:19.5px;left:31.40px;transform-origin:50% 50%;transform:translateX(-50%) scaleX(0.9900);">36</span><span class="t" style="top:1474.34px;line-height:31px;height:31px;color:#fff;font-size:19.5px;left:31.40px;transform-origin:50% 50%;transform:translateX(-50%) scaleX(0.9900);">37</span><span class="t" style="top:1503.34px;line-height:31px;height:31px;color:#fff;font-size:19.5px;left:31.40px;transform-origin:50% 50%;transform:translateX(-50%) scaleX(0.9900);">38</span><span class="t" style="top:1532.34px;line-height:31px;height:31px;color:#fff;font-size:19.5px;left:31.40px;transform-origin:50% 50%;transform:translateX(-50%) scaleX(0.9900);">39</span><span class="t" style="top:1561.34px;line-height:31px;height:31px;color:#fff;font-size:19.5px;left:31.40px;transform-origin:50% 50%;transform:translateX(-50%) scaleX(0.9900);">40</span><span class="t" style="top:1590.34px;line-height:31px;height:31px;color:#fff;font-size:19.5px;left:31.40px;transform-origin:50% 50%;transform:translateX(-50%) scaleX(0.9900);">41</span><span class="t" style="top:1619.34px;line-height:31px;height:31px;color:#fff;font-size:19.5px;left:31.40px;transform-origin:50% 50%;transform:translateX(-50%) scaleX(0.9900);">42</span><span class="t" style="top:1648.34px;line-height:31px;height:31px;color:#fff;font-size:19.5px;left:31.40px;transform-origin:50% 50%;transform:translateX(-50%) scaleX(0.9900);">43</span><span class="t" style="top:1677.34px;line-height:31px;height:31px;color:#fff;font-size:19.5px;left:31.40px;transform-origin:50% 50%;transform:translateX(-50%) scaleX(0.9900);">44</span><span class="t" style="top:1706.34px;line-height:31px;height:31px;color:#fff;font-size:19.5px;left:31.40px;transform-origin:50% 50%;transform:translateX(-50%) scaleX(0.9900);">45</span><span class="t" style="top:1735.34px;line-height:31px;height:31px;color:#fff;font-size:19.5px;left:31.40px;transform-origin:50% 50%;transform:translateX(-50%) scaleX(0.9900);">46</span>
</div>
<div class="b" style="left:0;top:0;width:9px;height:1840px;background:linear-gradient(180deg,#0d170c 0%,#0c150b 45%,#090d07 70%,#0b0d08 100%)"></div>
<div class="clip" style="clip-path:inset(0 2470px 8px 0)">
<div class="b" style="left:2.5px;top:62px;width:8px;height:50px;background:#efae1d;border-radius:2px 0 0 3px"></div>
<div class="b" style="left:5px;top:71px;width:5px;height:21px;background:#d9d9d6;"></div>
<div class="b" style="left:3.5px;top:92px;width:6px;height:18px;background:#f2d98a;"></div>
<div class="b" style="left:3px;top:209.5px;width:8px;height:49px;background:#efae1d;border-radius:2px 0 0 3px"></div>
<div class="b" style="left:3.5px;top:221px;width:6px;height:35.5px;background:#f2d98a;"></div>
<div class="b" style="left:3px;top:356px;width:8px;height:50px;background:#efae1d;border-radius:2px 0 0 3px"></div>
<div class="b" style="left:3.5px;top:367px;width:6px;height:37px;background:#f2d98a;"></div>
<div class="b" style="left:0px;top:497px;width:9px;height:24px;background:linear-gradient(180deg,#45bfea,#2a9fdc);clip-path:polygon(0 0,100% 0,100% 62%,0 100%)"></div>
<svg class="b" style="left:0;top:546px" width="9" height="19" viewBox="0 0 9 19"><rect width="9" height="19" fill="#e4eaf4"/><path d="M1.5 14.5L8 7M4 6.5H8.5V11" fill="none" stroke="#1a7fd8" stroke-width="1.6"/></svg>
<svg class="b" style="left:0;top:693.7px" width="9" height="19" viewBox="0 0 9 19"><rect width="9" height="19" fill="#e4eaf4"/><path d="M1.5 14.5L8 7M4 6.5H8.5V11" fill="none" stroke="#1a7fd8" stroke-width="1.6"/></svg>
<svg class="b" style="left:0;top:841px" width="9" height="19" viewBox="0 0 9 19"><rect width="9" height="19" fill="#e4eaf4"/><path d="M1.5 14.5L8 7M4 6.5H8.5V11" fill="none" stroke="#1a7fd8" stroke-width="1.6"/></svg>
<svg class="b" style="left:0;top:988px" width="9" height="19" viewBox="0 0 9 19"><rect width="9" height="19" fill="#e4eaf4"/><path d="M1.5 14.5L8 7M4 6.5H8.5V11" fill="none" stroke="#1a7fd8" stroke-width="1.6"/></svg>
<svg class="b" style="left:0;top:1134.7px" width="9" height="19" viewBox="0 0 9 19"><rect width="9" height="19" fill="#e4eaf4"/><path d="M1.5 14.5L8 7M4 6.5H8.5V11" fill="none" stroke="#1a7fd8" stroke-width="1.6"/></svg>
<svg class="b" style="left:0;top:1282px" width="9" height="19" viewBox="0 0 9 19"><rect width="9" height="19" fill="#e4eaf4"/><path d="M1.5 14.5L8 7M4 6.5H8.5V11" fill="none" stroke="#1a7fd8" stroke-width="1.6"/></svg>
<div class="b" style="left:1px;top:650px;width:9px;height:25px;background:#e3008c;border-radius:9px 0 0 0"></div>
<div class="b" style="left:1px;top:679px;width:9px;height:14px;background:#e3008c;border-radius:0 0 0 6px"></div>
<div class="b" style="left:0px;top:798px;width:18px;height:42px;background:radial-gradient(circle at 80% 40%,#3d8ae0,#2464b8);border-radius:50%"></div>
<div class="b" style="left:0px;top:1091.5px;width:18px;height:43px;background:radial-gradient(circle at 80% 40%,#2d9be8,#0f6cc4);border-radius:50%"></div>
<div class="b" style="left:2.5px;top:940px;width:7px;height:47px;background:linear-gradient(90deg,#c6cad2,#e4e6ea);border-radius:2px 0 0 0"></div>
<div class="b" style="left:3px;top:1246px;width:14px;height:36px;background:#e6dcea;border:2px solid #d63c8e;border-radius:50%;box-sizing:border-box"></div>
<div class="b" style="left:0px;top:1413px;width:9px;height:26px;background:#272539;"></div>
<div class="b" style="left:2.5px;top:1530px;width:7px;height:61px;background:linear-gradient(180deg,#d6d9d6 0%,#c9cfc4 45%,#7fb04c 60%,#3f9a2c 100%);"></div>
<div class="b" style="left:0px;top:1671px;width:9px;height:67px;background:linear-gradient(180deg,#e8925c 0%,#c77a86 22%,#5a62c8 42%,#1f55cc 60%,#0a3aa6 100%);"></div><span class="t" style="top:127.84px;line-height:28px;height:28px;color:#f4f4f4;font-size:17.2px;text-shadow:0 1px 2px #000;left:-3.00px;transform-origin:0 50%;transform:scaleX(0.9400);">ec</span><span class="t" style="top:274.04px;line-height:28px;height:28px;color:#f4f4f4;font-size:17.2px;text-shadow:0 1px 2px #000;left:1.50px;transform-origin:0 50%;transform:scaleX(0.9400);">c</span><span class="t" style="top:421.74px;line-height:28px;height:28px;color:#f4f4f4;font-size:17.2px;text-shadow:0 1px 2px #000;left:-3.00px;transform-origin:0 50%;transform:scaleX(0.9400);">el</span><span class="t" style="top:568.04px;line-height:28px;height:28px;color:#f4f4f4;font-size:17.2px;text-shadow:0 1px 2px #000;left:2.30px;transform-origin:0 50%;transform:scaleX(0.9400);">V</span><span class="t" style="top:716.04px;line-height:28px;height:28px;color:#f4f4f4;font-size:17.2px;text-shadow:0 1px 2px #000;left:-7.50px;transform-origin:0 50%;transform:scaleX(0.9400);">Va</span><span class="t" style="top:862.74px;line-height:28px;height:28px;color:#f4f4f4;font-size:17.2px;text-shadow:0 1px 2px #000;left:1.20px;transform-origin:0 50%;transform:scaleX(0.9400);">It</span><span class="t" style="top:1009.74px;line-height:28px;height:28px;color:#f4f4f4;font-size:17.2px;text-shadow:0 1px 2px #000;left:-4.00px;transform-origin:0 50%;transform:scaleX(0.9400);">Sy</span><span class="t" style="top:1034.04px;line-height:28px;height:28px;color:#f4f4f4;font-size:17.2px;text-shadow:0 1px 2px #000;left:-7.00px;transform-origin:0 50%;transform:scaleX(0.9400);">Pr</span><span class="t" style="top:1154.64px;line-height:28px;height:28px;color:#f4f4f4;font-size:17.2px;text-shadow:0 1px 2px #000;left:-1.50px;transform-origin:0 50%;transform:scaleX(0.9400);">V</span><span class="t" style="top:1450.04px;line-height:28px;height:28px;color:#f4f4f4;font-size:17.2px;text-shadow:0 1px 2px #000;left:-7.50px;transform-origin:0 50%;transform:scaleX(0.9400);">23</span><span class="t" style="top:1745.04px;line-height:28px;height:28px;color:#f4f4f4;font-size:17.2px;text-shadow:0 1px 2px #000;left:2.60px;transform-origin:0 50%;transform:scaleX(0.9400);">5</span>
</div>
<div class="b" style="left:9px;top:0px;width:2px;height:1840px;background:#868686;"></div>
<div class="b" style="left:23px;top:-12px;width:2470px;height:33px;background:#c1c1c1;border-radius:0 0 0 11px;box-shadow:0 1px 0 0 #2c2c2c,0 2px 6px 1px rgba(0,0,0,.5)"></div>
<div class="b" style="left:188px;top:0px;width:1px;height:12px;background:#8c8c8c;"></div>
<div class="b" style="left:539px;top:0px;width:1px;height:12px;background:#8c8c8c;"></div>
<div class="b" style="left:992px;top:0px;width:1px;height:12px;background:#8c8c8c;"></div>
<div class="b" style="left:1234px;top:0px;width:1px;height:12px;background:#8c8c8c;"></div>
<div class="b" style="left:1545px;top:0px;width:1px;height:12px;background:#8c8c8c;"></div>
<div class="b" style="left:1765px;top:0px;width:1px;height:12px;background:#8c8c8c;"></div>
<div class="b" style="left:2026px;top:0px;width:1px;height:12px;background:#8c8c8c;"></div>
<div class="b" style="left:2118px;top:0px;width:1px;height:12px;background:#8c8c8c;"></div>
<div class="b" style="left:2204px;top:0px;width:1px;height:12px;background:#8c8c8c;"></div>
<div class="b" style="left:2324px;top:0px;width:1px;height:12px;background:#8c8c8c;"></div>
<svg class="b" style="left:171px;top:0px" width="13" height="13" viewBox="0 0 13 13" fill="none" stroke="#1f1f1f"><path d="M0.8 10.8V0.7H10.5" stroke-width="1.5"/><path d="M4.7 4.7L11 11" stroke-width="1.6"/><path d="M11.2 4V11H4.4" stroke-width="1.8"/></svg>
<svg class="b" style="left:522px;top:0px" width="13" height="13" viewBox="0 0 13 13" fill="none" stroke="#1f1f1f"><path d="M0.8 10.8V0.7H10.5" stroke-width="1.5"/><path d="M4.7 4.7L11 11" stroke-width="1.6"/><path d="M11.2 4V11H4.4" stroke-width="1.8"/></svg>
<svg class="b" style="left:976px;top:0px" width="13" height="13" viewBox="0 0 13 13" fill="none" stroke="#1f1f1f"><path d="M0.8 10.8V0.7H10.5" stroke-width="1.5"/><path d="M4.7 4.7L11 11" stroke-width="1.6"/><path d="M11.2 4V11H4.4" stroke-width="1.8"/></svg>
<svg class="b" style="left:1217px;top:0px" width="13" height="13" viewBox="0 0 13 13" fill="none" stroke="#1f1f1f"><path d="M0.8 10.8V0.7H10.5" stroke-width="1.5"/><path d="M4.7 4.7L11 11" stroke-width="1.6"/><path d="M11.2 4V11H4.4" stroke-width="1.8"/></svg>
<svg class="b" style="left:2459.3px;top:-8px" width="18" height="14" viewBox="0 0 18 14" fill="none" stroke="#333" stroke-width="1.5"><path d="M2 4L10 12L18 4"/></svg>
<div class="b" style="left:23px;top:33px;width:150px;height:33px;border:1px solid #8f8f8f;border-radius:7px"></div>
<div class="b" style="left:205px;top:33px;width:126px;height:33px;border:1px solid #8f8f8f;border-radius:7px"></div>
<div class="b" style="left:339px;top:33px;width:2200px;height:33px;border:1px solid #8f8f8f;border-radius:7px"></div>
<svg class="b" style="left:151px;top:45px" width="18" height="13" viewBox="0 0 18 13" fill="none" stroke="#e0e0e0" stroke-width="1.6"><path d="M1.5 3.2L8.5 10.2L15.5 3.2"/></svg>
<div class="b" style="left:188px;top:43px;width:4px;height:3px;background:#d0d0d0;"></div>
<div class="b" style="left:188px;top:49px;width:4px;height:3px;background:#d0d0d0;"></div>
<div class="b" style="left:188px;top:55px;width:4px;height:3px;background:#d0d0d0;"></div>
<svg class="b" style="left:213px;top:40px" width="22" height="22" viewBox="0 0 22 22" fill="none" stroke="#8c8c8c" stroke-width="1.5"><path d="M2 2L20 19.5M20 2L2 19.5"/></svg>
<svg class="b" style="left:246px;top:40px" width="28" height="22" viewBox="0 0 28 22" fill="none" stroke="#8c8c8c" stroke-width="1.5"><path d="M2 10L10.4 18L26 2"/></svg>
<svg class="b" style="left:314px;top:45px" width="16" height="12" viewBox="0 0 16 12" fill="none" stroke="#b0b0b0" stroke-width="1.5"><path d="M1 2L8 9.5L15 2"/></svg>
<svg class="b" style="left:2465.5px;top:42px" width="18" height="14" viewBox="0 0 18 14" fill="none" stroke="#d0d0d0" stroke-width="1.5"><path d="M4 3L11.5 10.5L19 3"/></svg>
<div class="b" style="left:11px;top:106px;width:2461px;height:1px;background:#a8a8a8;"></div>
<div class="b" style="left:11px;top:106px;width:39px;height:1px;background:#d2d2d2;"></div>
<div class="b" style="left:96px;top:78px;width:1px;height:28px;background:#c2c2c2;"></div>
<div class="b" style="left:376px;top:78px;width:1px;height:28px;background:#c2c2c2;"></div>
<div class="b" style="left:496px;top:78px;width:1px;height:28px;background:#c2c2c2;"></div>
<div class="b" style="left:736px;top:78px;width:1px;height:28px;background:#c2c2c2;"></div>
<div class="b" style="left:836px;top:78px;width:1px;height:28px;background:#c2c2c2;"></div>
<div class="b" style="left:936px;top:78px;width:1px;height:28px;background:#c2c2c2;"></div>
<div class="b" style="left:1036px;top:78px;width:1px;height:28px;background:#c2c2c2;"></div>
<div class="b" style="left:1136px;top:78px;width:1px;height:28px;background:#c2c2c2;"></div>
<div class="b" style="left:1256px;top:78px;width:1px;height:28px;background:#c2c2c2;"></div>
<div class="b" style="left:1376px;top:78px;width:1px;height:28px;background:#c2c2c2;"></div>
<div class="b" style="left:1596px;top:78px;width:1px;height:28px;background:#c2c2c2;"></div>
<div class="b" style="left:1816px;top:78px;width:1px;height:28px;background:#c2c2c2;"></div>
<div class="b" style="left:2036px;top:78px;width:1px;height:28px;background:#c2c2c2;"></div>
<div class="b" style="left:2256px;top:78px;width:1px;height:28px;background:#c2c2c2;"></div>
<svg class="b" style="left:25px;top:81px" width="23" height="23" viewBox="0 0 23 23"><path d="M1 22H22V1Z" fill="#f0f0f0"/></svg>
<div class="b" style="left:50px;top:107px;width:1px;height:1650px;background:#a8a8a8;"></div>
<div class="b" style="left:11px;top:170px;width:39px;height:1px;background:#c2c2c2;"></div>
<div class="b" style="left:11px;top:214px;width:39px;height:1px;background:#c2c2c2;"></div>
<div class="b" style="left:11px;top:254px;width:39px;height:1px;background:#c2c2c2;"></div>
<div class="b" style="left:11px;top:310px;width:39px;height:1px;background:#c2c2c2;"></div>
<div class="b" style="left:11px;top:350px;width:39px;height:1px;background:#c2c2c2;"></div>
<div class="b" style="left:11px;top:390px;width:39px;height:1px;background:#c2c2c2;"></div>
<div class="b" style="left:11px;top:430px;width:39px;height:1px;background:#c2c2c2;"></div>
<div class="b" style="left:11px;top:470px;width:39px;height:1px;background:#c2c2c2;"></div>
<div class="b" style="left:11px;top:510px;width:39px;height:1px;background:#c2c2c2;"></div>
<div class="b" style="left:11px;top:550px;width:39px;height:1px;background:#c2c2c2;"></div>
<div class="b" style="left:11px;top:590px;width:39px;height:1px;background:#c2c2c2;"></div>
<div class="b" style="left:11px;top:630px;width:39px;height:1px;background:#c2c2c2;"></div>
<div class="b" style="left:11px;top:670px;width:39px;height:1px;background:#c2c2c2;"></div>
<div class="b" style="left:11px;top:710px;width:39px;height:1px;background:#c2c2c2;"></div>
<div class="b" style="left:11px;top:750px;width:39px;height:1px;background:#c2c2c2;"></div>
<div class="b" style="left:11px;top:790px;width:39px;height:1px;background:#c2c2c2;"></div>
<div class="b" style="left:11px;top:830px;width:39px;height:1px;background:#c2c2c2;"></div>
<div class="b" style="left:11px;top:870px;width:39px;height:1px;background:#c2c2c2;"></div>
<div class="b" style="left:11px;top:910px;width:39px;height:1px;background:#c2c2c2;"></div>
<div class="b" style="left:11px;top:950px;width:39px;height:1px;background:#c2c2c2;"></div>
<div class="b" style="left:11px;top:990px;width:39px;height:1px;background:#c2c2c2;"></div>
<div class="b" style="left:11px;top:1030px;width:39px;height:1px;background:#c2c2c2;"></div>
<div class="b" style="left:11px;top:1070px;width:39px;height:1px;background:#c2c2c2;"></div>
<div class="b" style="left:11px;top:1110px;width:39px;height:1px;background:#c2c2c2;"></div>
<div class="b" style="left:11px;top:1154px;width:39px;height:1px;background:#c2c2c2;"></div>
<div class="b" style="left:11px;top:1183px;width:39px;height:1px;background:#c2c2c2;"></div>
<div class="b" style="left:11px;top:1212px;width:39px;height:1px;background:#c2c2c2;"></div>
<div class="b" style="left:11px;top:1241px;width:39px;height:1px;background:#c2c2c2;"></div>
<div class="b" style="left:11px;top:1270px;width:39px;height:1px;background:#c2c2c2;"></div>
<div class="b" style="left:11px;top:1299px;width:39px;height:1px;background:#c2c2c2;"></div>
<div class="b" style="left:11px;top:1328px;width:39px;height:1px;background:#c2c2c2;"></div>
<div class="b" style="left:11px;top:1357px;width:39px;height:1px;background:#c2c2c2;"></div>
<div class="b" style="left:11px;top:1386px;width:39px;height:1px;background:#c2c2c2;"></div>
<div class="b" style="left:11px;top:1415px;width:39px;height:1px;background:#c2c2c2;"></div>
<div class="b" style="left:11px;top:1444px;width:39px;height:1px;background:#c2c2c2;"></div>
<div class="b" style="left:11px;top:1473px;width:39px;height:1px;background:#c2c2c2;"></div>
<div class="b" style="left:11px;top:1502px;width:39px;height:1px;background:#c2c2c2;"></div>
<div class="b" style="left:11px;top:1531px;width:39px;height:1px;background:#c2c2c2;"></div>
<div class="b" style="left:11px;top:1560px;width:39px;height:1px;background:#c2c2c2;"></div>
<div class="b" style="left:11px;top:1589px;width:39px;height:1px;background:#c2c2c2;"></div>
<div class="b" style="left:11px;top:1618px;width:39px;height:1px;background:#c2c2c2;"></div>
<div class="b" style="left:11px;top:1647px;width:39px;height:1px;background:#c2c2c2;"></div>
<div class="b" style="left:11px;top:1676px;width:39px;height:1px;background:#c2c2c2;"></div>
<div class="b" style="left:11px;top:1705px;width:39px;height:1px;background:#c2c2c2;"></div>
<div class="b" style="left:11px;top:1734px;width:39px;height:1px;background:#c2c2c2;"></div>
<div class="b" style="left:11px;top:1763px;width:39px;height:1px;background:#c2c2c2;"></div>
<div class="b" style="left:2475px;top:81px;width:12px;height:1678px;background:#3b3b3b;border-radius:6px"></div>
<div class="b" style="left:11px;top:1757px;width:2468px;height:82px;background:#505050;"></div>
<div class="b" style="left:11px;top:1805px;width:2468px;height:1px;background:#3a3a3a;"></div>
<svg class="b" style="left:44px;top:1771px" width="13" height="18" viewBox="0 0 13 18" fill="none" stroke="#9a9a9a" stroke-width="1.6"><path d="M10.5 1.5L2.5 9L10.5 16.5"/></svg>
<svg class="b" style="left:93px;top:1771px" width="13" height="18" viewBox="0 0 13 18" fill="none" stroke="#9a9a9a" stroke-width="1.6"><path d="M2.5 1.5L10.5 9L2.5 16.5"/></svg>
<div class="b" style="left:600px;top:1757px;width:114px;height:42px;background:#fff;border-radius:0 0 8px 8px"></div>
<div class="b" style="left:592px;top:1757px;width:130px;height:8px;background:#fff;"></div>
<div class="b" style="left:584px;top:1757px;width:16px;height:14px;background:#505050;border-radius:0 8px 0 0"></div>
<div class="b" style="left:714px;top:1757px;width:16px;height:14px;background:#505050;border-radius:8px 0 0 0"></div>
<div class="b" style="left:612px;top:1792px;width:90px;height:3px;background:#107c41;"></div>
<div class="b" style="left:310px;top:1767px;width:1px;height:28px;background:#787878;"></div>
<div class="b" style="left:451px;top:1767px;width:1px;height:28px;background:#787878;"></div>
<div class="b" style="left:593px;top:1767px;width:1px;height:28px;background:#787878;"></div>
<div class="b" style="left:720px;top:1767px;width:1px;height:28px;background:#787878;"></div>
<div class="b" style="left:830px;top:1767px;width:1px;height:28px;background:#787878;"></div>
<div class="b" style="left:980px;top:1767px;width:1px;height:28px;background:#787878;"></div>
<div class="b" style="left:1079px;top:1767px;width:1px;height:28px;background:#787878;"></div>
<div class="b" style="left:1245px;top:1767px;width:1px;height:28px;background:#787878;"></div>
<div class="b" style="left:1355px;top:1767px;width:1px;height:28px;background:#787878;"></div>
<svg class="b" style="left:1418.5px;top:1770.5px" width="18" height="18" viewBox="0 0 18 18" fill="none" stroke="#d8d8d8" stroke-width="1.5"><path d="M9 0.6V17.4M0.6 9H17.4"/></svg>
<div class="b" style="left:1510px;top:1774px;width:4px;height:3px;background:#d8d8d8;"></div>
<div class="b" style="left:1510px;top:1779.8px;width:4px;height:3px;background:#d8d8d8;"></div>
<div class="b" style="left:1510px;top:1785.7px;width:4px;height:3px;background:#d8d8d8;"></div>
<div class="b" style="left:1536px;top:1767px;width:939px;height:26px;background:#3b3b3b;border-radius:13px"></div>
<svg class="b" style="left:1543px;top:1772px" width="12" height="16" viewBox="0 0 12 16"><path d="M11 1.5V14.5L1 8Z" fill="#c8c8c8" stroke="#c8c8c8" stroke-width="1" stroke-linejoin="round"/></svg>
<svg class="b" style="left:2456px;top:1772px" width="12" height="16" viewBox="0 0 12 16"><path d="M1 1.5V14.5L11 8Z" fill="#c8c8c8" stroke="#c8c8c8" stroke-width="1" stroke-linejoin="round"/></svg>
<div class="b" style="left:1569px;top:1774px;width:686px;height:12px;background:#c8c8c8;border-radius:6px"></div>
<svg class="b" style="left:118px;top:1810px" width="24" height="24" viewBox="0 0 24 24" fill="none" stroke-linecap="round" stroke-linejoin="round"><g stroke="#f4f4f4" stroke-width="4.2"><path d="M3.2 7.4Q10.4 10.6 17.6 7.4"/><path d="M10.4 9.5V14L6.4 20.6"/><path d="M10.4 14L12 16.4"/></g><g stroke="#505050" stroke-width="1.5"><path d="M3.2 7.4Q10.4 10.6 17.6 7.4"/><path d="M10.4 9.5V14L6.4 20.6"/><path d="M10.4 14L12 16.4"/></g><circle cx="10.4" cy="3.9" r="2.5" stroke="#f4f4f4" stroke-width="1.4" fill="#505050"/><path d="M12.8 12.6L22 22.4M22 12.6L12.8 22.4" stroke="#f4f4f4" stroke-width="1.3"/></svg>
<div class="b" style="left:2040px;top:1806px;width:60px;height:33px;background:#5c5c5c;"></div>
<svg class="b" style="left:2058px;top:1810px" width="22" height="22" viewBox="0 0 22 22" fill="none" stroke="#f2f2f2" stroke-width="1.8"><rect x="1.5" y="1.5" width="19" height="19"/><path d="M8 1.5V20.5M14 1.5V20.5M1.5 8H20.5M1.5 14H20.5"/></svg>
<svg class="b" style="left:2118px;top:1810px" width="24" height="22" viewBox="0 0 24 22" fill="none" stroke="#f2f2f2" stroke-width="1.8"><rect x="1.5" y="1.5" width="21" height="19"/><rect x="5.6" y="4.6" width="12.8" height="12.8" stroke-width="1.5"/><path d="M8.5 8H15.5M8.5 11H15.5M8.5 14H15.5" stroke-width="1.3"/></svg>
<svg class="b" style="left:2178px;top:1810px" width="24" height="22" viewBox="0 0 24 22" fill="none" stroke="#f2f2f2" stroke-width="1.8"><rect x="1.5" y="1.5" width="21" height="19"/><path d="M8.3 1.5V12.5M14.5 1.5V12.5M1.5 12.5H14.5"/></svg>
<div class="b" style="left:2228px;top:1821px;width:12px;height:1px;background:#cfcfcf;"></div>
<div class="b" style="left:2248px;top:1820.5px;width:148px;height:2px;background:#bdbdbd;"></div>
<div class="b" style="left:2318px;top:1812.5px;width:8px;height:18px;background:#c8c8c8;border-radius:1px"></div>
<div class="b" style="left:2404px;top:1821px;width:12px;height:1px;background:#cfcfcf;"></div>
<div class="b" style="left:2409.5px;top:1815.5px;width:1px;height:12px;background:#cfcfcf;"></div>
<div class="b" style="left:0px;top:1838px;width:2479px;height:2px;background:#8f8f8f;"></div>
<div class="b" style="left:0;top:1840px;width:2479px;height:8px;background:linear-gradient(90deg,#d3dcc9 0%,#d9dccf 45%,#e2dfda 80%,#e6e0de 100%)"></div>
<span class="t" style="top:-6.51px;line-height:25px;height:25px;color:#444444;font-size:15.6px;left:63.80px;transform-origin:0 50%;transform:scaleX(0.9618);">Bảng tạm</span><span class="t" style="top:-6.51px;line-height:25px;height:25px;color:#444444;font-size:15.6px;left:314.80px;transform-origin:0 50%;transform:scaleX(0.9588);">Phông chữ</span><span class="t" style="top:-6.51px;line-height:25px;height:25px;color:#444444;font-size:15.6px;left:718.80px;transform-origin:0 50%;transform:scaleX(0.9855);">Căn chỉnh</span><span class="t" style="top:-6.51px;line-height:25px;height:25px;color:#444444;font-size:15.6px;left:1092.50px;transform-origin:0 50%;transform:scaleX(0.9173);">Số</span><span class="t" style="top:-6.51px;line-height:25px;height:25px;color:#444444;font-size:15.6px;left:1374.00px;transform-origin:0 50%;transform:scaleX(0.9610);">Kiểu</span><span class="t" style="top:-6.51px;line-height:25px;height:25px;color:#444444;font-size:15.6px;left:1648.70px;transform-origin:0 50%;transform:scaleX(1.0131);">Ô</span><span class="t" style="top:-6.51px;line-height:25px;height:25px;color:#444444;font-size:15.6px;left:1861.00px;transform-origin:0 50%;transform:scaleX(0.9585);">Chỉnh sửa</span><span class="t" style="top:-6.51px;line-height:25px;height:25px;color:#444444;font-size:15.6px;left:2030.50px;transform-origin:0 50%;transform:scaleX(0.9856);">Phần bổ trợ</span><span class="t" style="top:-6.51px;line-height:25px;height:25px;color:#444444;font-size:15.6px;left:2136.00px;transform-origin:0 50%;transform:scaleX(0.9854);">Claude</span><span class="t" style="top:-6.51px;line-height:25px;height:25px;color:#444444;font-size:15.6px;left:2257.00px;transform-origin:0 50%;transform:scaleX(0.8823);">AI</span><span class="t" style="top:31.54px;line-height:36px;height:36px;color:#fff;font-size:22.4px;left:29.60px;transform-origin:0 50%;transform:scaleX(0.9346);">A1</span><span class="t" style="top:27.56px;line-height:42px;height:42px;color:#d0d0d0;font-size:26.5px;font-style:italic;font-family:'Liberation Serif',serif;-webkit-text-stroke:0.35px #d0d0d0;left:285.00px;transform-origin:0 50%;transform:scaleX(1.1503);">fx</span><span class="t" style="top:32.16px;line-height:37px;height:37px;color:#fff;font-size:23.2px;left:355.80px;transform-origin:0 50%;transform:scaleX(0.9588);">BẢNG TỔNG HỢP CÔNG VÀ TÍNH LƯƠNG</span><span class="t" style="top:77.04px;line-height:32px;height:32px;color:#fff;font-size:19.8px;left:61.50px;transform-origin:50% 50%;transform:translateX(-50%) scaleX(0.9500);">A</span><span class="t" style="top:77.04px;line-height:32px;height:32px;color:#fff;font-size:19.8px;left:236.50px;transform-origin:50% 50%;transform:translateX(-50%) scaleX(0.9500);">B</span><span class="t" style="top:77.04px;line-height:32px;height:32px;color:#fff;font-size:19.8px;left:436.50px;transform-origin:50% 50%;transform:translateX(-50%) scaleX(0.9500);">C</span><span class="t" style="top:77.04px;line-height:32px;height:32px;color:#fff;font-size:19.8px;left:616.50px;transform-origin:50% 50%;transform:translateX(-50%) scaleX(0.9500);">D</span><span class="t" style="top:77.04px;line-height:32px;height:32px;color:#fff;font-size:19.8px;left:786.50px;transform-origin:50% 50%;transform:translateX(-50%) scaleX(0.9500);">E</span><span class="t" style="top:77.04px;line-height:32px;height:32px;color:#fff;font-size:19.8px;left:886.50px;transform-origin:50% 50%;transform:translateX(-50%) scaleX(0.9500);">F</span><span class="t" style="top:77.04px;line-height:32px;height:32px;color:#fff;font-size:19.8px;left:986.50px;transform-origin:50% 50%;transform:translateX(-50%) scaleX(0.9500);">G</span><span class="t" style="top:77.04px;line-height:32px;height:32px;color:#fff;font-size:19.8px;left:1086.50px;transform-origin:50% 50%;transform:translateX(-50%) scaleX(0.9500);">H</span><span class="t" style="top:77.04px;line-height:32px;height:32px;color:#fff;font-size:19.8px;left:1196.50px;transform-origin:50% 50%;transform:translateX(-50%) scaleX(0.9500);">I</span><span class="t" style="top:77.04px;line-height:32px;height:32px;color:#fff;font-size:19.8px;left:1316.50px;transform-origin:50% 50%;transform:translateX(-50%) scaleX(0.9500);">J</span><span class="t" style="top:77.04px;line-height:32px;height:32px;color:#fff;font-size:19.8px;left:1486.50px;transform-origin:50% 50%;transform:translateX(-50%) scaleX(0.9500);">K</span><span class="t" style="top:77.04px;line-height:32px;height:32px;color:#fff;font-size:19.8px;left:1706.50px;transform-origin:50% 50%;transform:translateX(-50%) scaleX(0.9500);">L</span><span class="t" style="top:77.04px;line-height:32px;height:32px;color:#fff;font-size:19.8px;left:1926.50px;transform-origin:50% 50%;transform:translateX(-50%) scaleX(0.9500);">M</span><span class="t" style="top:77.04px;line-height:32px;height:32px;color:#fff;font-size:19.8px;left:2146.50px;transform-origin:50% 50%;transform:translateX(-50%) scaleX(0.9500);">N</span><span class="t" style="top:77.04px;line-height:32px;height:32px;color:#fff;font-size:19.8px;left:2376.50px;transform-origin:50% 50%;transform:translateX(-50%) scaleX(0.9500);">O</span><span class="t" style="top:1765.22px;line-height:35px;height:35px;color:#fff;font-size:21.6px;left:191.30px;transform-origin:0 50%;transform:scaleX(0.9559);">HuongDan</span><span class="t" style="top:1765.22px;line-height:35px;height:35px;color:#fff;font-size:21.6px;left:332.00px;transform-origin:0 50%;transform:scaleX(0.9409);">Dashboard</span><span class="t" style="top:1765.22px;line-height:35px;height:35px;color:#fff;font-size:21.6px;left:471.00px;transform-origin:0 50%;transform:scaleX(0.9411);">ChamCong</span><span class="t" style="top:1765.22px;line-height:35px;height:35px;color:#fff;font-size:21.6px;left:739.70px;transform-origin:0 50%;transform:scaleX(0.9007);">PhuCap</span><span class="t" style="top:1765.22px;line-height:35px;height:35px;color:#fff;font-size:21.6px;left:850.60px;transform-origin:0 50%;transform:scaleX(0.9403);">PhieuLuong</span><span class="t" style="top:1765.22px;line-height:35px;height:35px;color:#fff;font-size:21.6px;left:1000.40px;transform-origin:0 50%;transform:scaleX(0.8799);">LichSu</span><span class="t" style="top:1765.22px;line-height:35px;height:35px;color:#fff;font-size:21.6px;left:1099.70px;transform-origin:0 50%;transform:scaleX(0.9138);">DS_NhanVien</span><span class="t" style="top:1765.22px;line-height:35px;height:35px;color:#fff;font-size:21.6px;left:1265.60px;transform-origin:0 50%;transform:scaleX(0.8969);">BaoCao</span><span class="t" style="top:1759.62px;line-height:35px;height:35px;color:#111;font-size:21.6px;left:612.00px;transform-origin:0 50%;transform:scaleX(1.0352);">TongHop</span><span class="t" style="top:1810.53px;line-height:24px;height:24px;color:#f0f0f0;font-size:15.2px;left:27.50px;transform-origin:0 50%;transform:scaleX(0.9706);">Sẵn sàng</span><span class="t" style="top:1810.53px;line-height:24px;height:24px;color:#fff;font-size:15.2px;font-weight:bold;left:145.30px;transform-origin:0 50%;transform:scaleX(1.0363);">Trợ năng: Cần điều tra</span><span class="t" style="top:1810.30px;line-height:24px;height:24px;color:#f0f0f0;font-size:15.3px;left:2435.00px;transform-origin:0 50%;transform:scaleX(0.9968);">100%</span>
</div>
</body></html>
